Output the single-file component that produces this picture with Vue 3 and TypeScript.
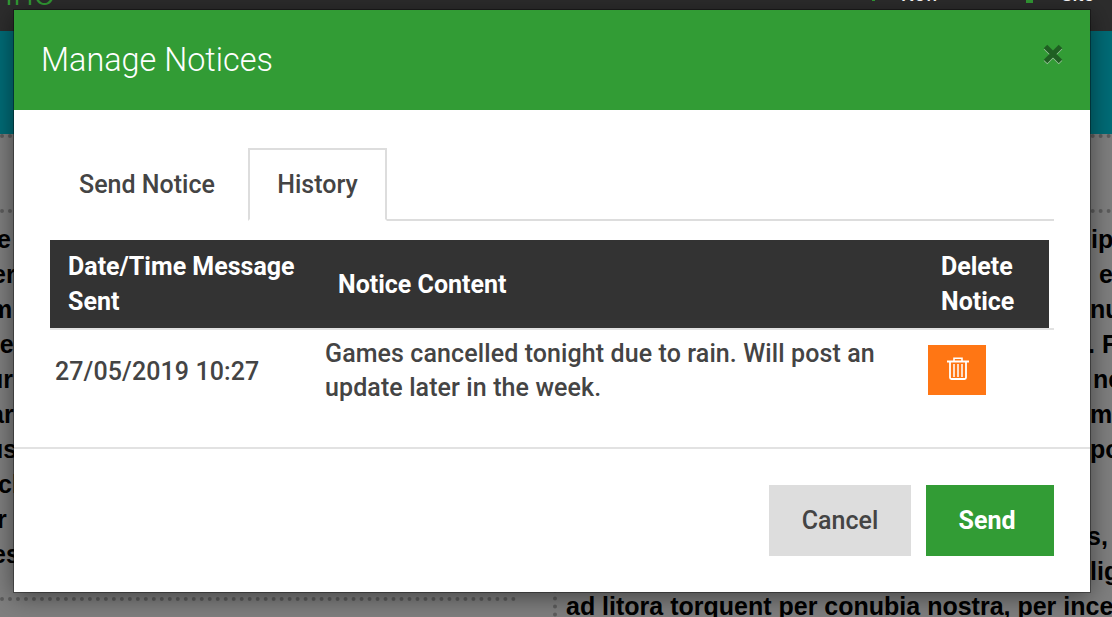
<script setup lang="ts">
interface Frag { text: string; shift: number; para?: boolean }
const leftLines: Frag[] = [
  { text: 'e', shift: -3 },
  { text: 'er', shift: -8 },
  { text: 'm', shift: -10 },
  { text: 're', shift: -10 },
  { text: 'ur', shift: -12 },
  { text: 'ar', shift: -10 },
  { text: 'us', shift: -12 },
  { text: 'cl', shift: -2 },
  { text: 'r', shift: -3 },
  { text: 'es', shift: -8 },
]
const rightLines: Frag[] = [
  { text: 'ip', shift: 1091 },
  { text: 'e', shift: 1099 },
  { text: 'nu', shift: 1090 },
  { text: '. F', shift: 1088 },
  { text: 'ne', shift: 1093 },
  { text: 'm', shift: 1090 },
  { text: 'po', shift: 1090 },
  { text: 's,', shift: 1087, para: true },
  { text: 'lig', shift: 1090 },
]
const tabs = ['Send Notice', 'History']
const rows = [
  { date: '27/05/2019 10:27', content: 'Games cancelled tonight due to rain. Will post an update later in the week.' },
]
</script>

<template>
  <div class="page">
    <div class="band"></div>
    <div class="dots one"></div>
    <div class="dots two"></div>
    <div class="content">
      <div class="col-left">
        <div v-for="l in leftLines" :key="l.text" class="line" :style="{ marginLeft: l.shift + 'px' }">{{ l.text }}</div>
      </div>
      <div class="col-right">
        <div
          v-for="l in rightLines"
          :key="l.text"
          class="line"
          :class="{ para: l.para }"
          :style="{ paddingLeft: l.shift - 566 + 'px' }"
        >{{ l.text }}</div>
        <div class="line last">ad litora torquent per conubia nostra, per inceptos</div>
      </div>
    </div>
    <div class="dots three"></div>
    <div class="overlay"></div>
    <div class="topbar">
      <span class="logo">nno</span>
      <span class="top-link first"><i class="dot"></i>New</span>
      <span class="top-link second"><i class="dot wide"></i>Site</span>
    </div>

    <section class="modal">
      <header class="modal-head">
        <h2>Manage Notices</h2>
        <svg class="close" width="22" height="22" viewBox="0 0 22 22" aria-label="close">
          <path d="M3.500 3.500 18.500 18.500M18.500 3.500 3.500 18.500" stroke="#9fc59f" stroke-width="5" fill="none" transform="translate(0 1)" />
          <path d="M3.500 3.500 18.500 18.500M18.500 3.500 3.500 18.500" stroke="#1f5f22" stroke-width="5" fill="none" />
        </svg>
      </header>
      <div class="modal-body">
        <nav class="tabs">
          <button v-for="(t, i) in tabs" :key="t" class="tab" :class="{ active: i === 1 }">{{ t }}</button>
        </nav>
        <table class="notices">
          <thead>
            <tr>
              <th class="c-date">Date/Time Message Sent</th>
              <th class="c-content">Notice Content</th>
              <th class="c-del">Delete Notice</th>
              <th class="c-gap"></th>
            </tr>
          </thead>
          <tbody>
            <tr v-for="r in rows" :key="r.date">
              <td class="d-date">{{ r.date }}</td>
              <td class="d-content">{{ r.content }}</td>
              <td class="d-del">
                <button class="trash" aria-label="Delete">
                  <svg width="22" height="25" viewBox="0 0 22 25" fill="none" stroke="#fff">
                    <path d="M0 5.500h22" stroke-width="2" />
                    <path d="M7 5V2.200h8V5" stroke-width="1.600" />
                    <path d="M3 6v15.500q0 1.500 1.500 1.500h13q1.500 0 1.500-1.500V6" stroke-width="1.800" />
                    <path d="M7 8v13M11 8v13M15 8v13" stroke-width="1.500" />
                  </svg>
                </button>
              </td>
              <td></td>
            </tr>
          </tbody>
        </table>
      </div>
      <footer class="modal-foot">
        <button class="btn cancel">Cancel</button>
        <button class="btn send">Send</button>
      </footer>
    </section>
  </div>
</template>

<style>
html, body { margin: 0; padding: 0; }
</style>

<style scoped>
.page {
  position: relative;
  width: 1112px;
  height: 617px;
  overflow: hidden;
  background: #fff;
  font-family: "Liberation Sans", Arial, sans-serif;
}
.topbar {
  position: absolute;
  left: 0;
  top: 0;
  width: 100%;
  height: 31px;
  background: #2d2d2d;
  overflow: hidden;
}
.logo {
  position: absolute;
  left: -8px;
  top: -27px;
  color: #329c35;
  font: 300 38px/1 Roboto, sans-serif;
}
.top-link {
  position: absolute;
  top: -15px;
  color: #fff;
  font: 500 19px/1 Roboto, sans-serif;
}
.top-link.first { left: 901px; }
.top-link.second { left: 1061px; }
.dot { position: absolute; left: -29px; top: 15px; width: 3px; height: 1px; background: #329c35; }
.dot.wide { left: -35px; width: 7px; height: 3px; }
.band { margin-top: 31px; height: 103px; background: #00d8ee; }
.dots { position: absolute; border-top: 4px dotted #bbb; }
.dots.one { left: 0; right: 0; top: 134px; }
.dots.two { left: 0; right: 0; top: 209px; }
.dots.three { left: 0; width: 516px; top: 597px; }
.content {
  position: absolute;
  left: 0;
  top: 222px;
  width: 1112px;
  display: grid;
  grid-template-columns: 14px 1fr;
  column-gap: 539px;
  font-weight: 700;
  font-size: 25px;
  color: #000;
}
.col-left { min-width: 0; }
.line { height: 35px; line-height: 35px; white-space: nowrap; }
.col-right {
  overflow: hidden;
  border-left: 4px dotted #bbb;
  padding-left: 9px;
  height: 395px;
}
.col-right .para { margin-top: 52px; }
.overlay {
  position: absolute;
  inset: 0;
  background: rgba(0, 0, 0, 0.5);
}
.modal {
  position: absolute;
  left: 14px;
  top: 10px;
  width: 1076px;
  height: 582px;
  background: #fff;
  box-shadow: 0 0 0 1px rgba(0, 0, 0, .35), 0 4px 24px rgba(0, 0, 0, .5);
  display: flex;
  flex-direction: column;
  font-family: Roboto, sans-serif;
  color: #444;
}
.modal-head {
  height: 100px;
  flex: none;
  background: #329c35;
  display: flex;
  justify-content: space-between;
  padding: 0 27px;
  box-sizing: border-box;
}
.modal-head h2 {
  margin: 0;
  font-size: 32.4px;
  font-weight: 300;
  color: #fff;
  line-height: 100px;
}
.close { margin-top: 33px; margin-right: -1px; }
.modal-body {
  height: 339px;
  flex: none;
  box-sizing: border-box;
  padding: 38px 36px 0;
  border-bottom: 2px solid #e2e2e2;
}
.tabs {
  display: flex;
  height: 73px;
  box-sizing: border-box;
  border-bottom: 2px solid #ddd;
}
.tab {
  font: 500 25px Roboto, sans-serif;
  color: #444;
  background: #fff;
  border: 2px solid transparent;
  padding: 0 4px 0 0;
  width: 198px;
  height: 73px;
  box-sizing: border-box;
}
.tab.active {
  border-color: #ddd;
  border-bottom-color: #fff;
  width: 139px;
  padding: 0;
}
.notices {
  margin-top: 19px;
  width: 1004px;
  border-collapse: collapse;
  table-layout: fixed;
}
thead tr { border-bottom: 2px solid #e2e2e2; }
th {
  color: #fff;
  background: #333;
  font-size: 25px;
  font-weight: 700;
  text-align: left;
  line-height: 35px;
  height: 88px;
  padding: 0;
}
.c-date { width: 252px; padding-left: 18px; }
.c-content { width: 603px; padding-left: 18px; }
.c-del { width: 108px; }
.c-gap { width: 5px; background: #fff; }
td { font-size: 25px; font-weight: 500; letter-spacing: .1px; line-height: 35px; padding: 0; color: #444; height: 83px; }
.d-date { padding-left: 5px; }
.d-content { padding: 7px 0 0 5px; vertical-align: top; line-height: 34px; height: 76px; }
.d-del { vertical-align: top; }
.trash {
  display: flex;
  align-items: center;
  justify-content: center;
  width: 58px;
  height: 50px;
  margin: 15px 0 0 -13px;
  background: #ff7614;
  border: 0;
  padding: 0;
}
.trash svg { margin: 0 0 3px 1px; }
.modal-foot {
  display: flex;
  justify-content: flex-end;
  gap: 15px;
  padding: 36px 36px 0;
}
.btn {
  height: 71px;
  border: 0;
  font: 500 25px Roboto, sans-serif;
}
.cancel { width: 142px; background: #ddd; color: #444; }
.send { width: 128px; background: #329c35; color: #fff; font-weight: 700; padding: 0 6px 0 0; }
</style>
